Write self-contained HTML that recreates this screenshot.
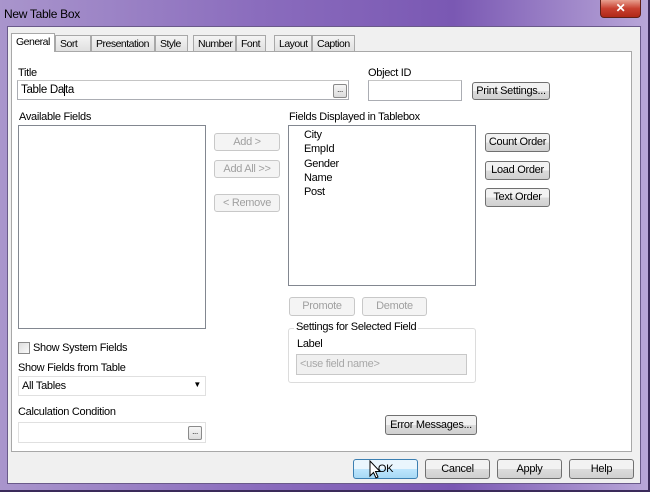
<!DOCTYPE html><html><head><style>
*{box-sizing:border-box;margin:0;padding:0}
body{width:650px;height:492px;overflow:hidden;font-family:"Liberation Sans",sans-serif;font-size:11px;color:#000;background:#8a6fb8;position:relative;letter-spacing:-0.3px}
.frame{position:absolute;left:0;top:0;width:650px;height:492px;background:linear-gradient(90deg,#a995cc 0%,#8a6cbd 40%,#7a58b3 70%,#b8a6d8 100%);border-right:2px solid #3a2a5a;border-bottom:2px solid #3a2a5a}
.title{position:absolute;left:4px;top:7px;font-size:12px;color:#000}
.close{position:absolute;left:600px;top:0;width:41px;height:18px;background:linear-gradient(#e8a090,#c84030 50%,#b02818);border:1px solid #602018;border-top:none;border-radius:0 0 4px 4px;color:#fff;font-weight:bold;text-align:center;font-size:12px;line-height:16px}
.bodyd{position:absolute;left:7px;top:26px;width:634px;height:458px;background:#f0f0f0;border:1px solid #6a5a8a}
.panel{position:absolute;left:11px;top:51px;width:621px;height:401px;background:#fff;border:1px solid #a8a8a8}
.tab{position:absolute;top:35px;height:16px;border:1px solid #a8a8a8;border-bottom:none;background:linear-gradient(#f4f4f4,#e0e0e0);padding:2px 0 0 4px;font-size:10.5px;letter-spacing:-0.5px;white-space:nowrap;overflow:hidden}
.tab.sel{top:33px;height:19px;background:#fff;z-index:2}
.a{position:absolute}
.in{position:absolute;background:#fff;border:1px solid #abadb3;border-top-color:#c5c5c5}
.btn{position:absolute;border:1px solid #707070;border-radius:3px;background:linear-gradient(#f2f2f2 50%,#dcdcdc 50%,#d0d0d0);text-align:center;font-size:11px}
.dis{border-color:#c8c8c8;background:#f4f4f4;color:#a0a0a0}
.dots{position:absolute;width:14px;height:14px;border:1px solid #8a8a8a;border-radius:2px;background:linear-gradient(#f6f6f6,#dcdcdc);font-size:8px;text-align:center;line-height:10px}
</style></head><body>
<div class="frame"></div>
<div class="title">New Table Box</div>
<div class="close">✕</div>
<div class="bodyd"></div>
<div class="panel"></div>
<div class="tab sel" style="left:11px;width:44px">General</div>
<div class="tab" style="left:55px;width:36px">Sort</div>
<div class="tab" style="left:91px;width:64px">Presentation</div>
<div class="tab" style="left:155px;width:33px">Style</div>
<div class="tab" style="left:193px;width:43px">Number</div>
<div class="tab" style="left:236px;width:30px">Font</div>
<div class="tab" style="left:274px;width:38px">Layout</div>
<div class="tab" style="left:312px;width:43px">Caption</div>

<div class="a" style="left:18px;top:67px">Title</div>
<div class="in" style="left:17px;top:80px;width:332px;height:20px"><span style="position:absolute;left:3px;top:3px;font-size:11.5px">Table Da<span style="border-left:1px solid #000"></span>ta</span></div>
<div class="dots" style="left:333px;top:84px">...</div>
<div class="a" style="left:368px;top:67px">Object ID</div>
<div class="in" style="left:368px;top:80px;width:94px;height:21px"></div>
<div class="btn" style="left:472px;top:82px;width:78px;height:18px;line-height:16px">Print Settings...</div>

<div class="a" style="left:19px;top:111px">Available Fields</div>
<div class="in" style="left:18px;top:125px;width:188px;height:204px;border-color:#828790"></div>
<div class="btn dis" style="left:214px;top:133px;width:66px;height:18px;line-height:16px">Add &gt;</div>
<div class="btn dis" style="left:214px;top:160px;width:66px;height:18px;line-height:16px">Add All &gt;&gt;</div>
<div class="btn dis" style="left:214px;top:194px;width:66px;height:18px;line-height:16px">&lt; Remove</div>

<div class="a" style="left:289px;top:111px">Fields Displayed in Tablebox</div>
<div class="in" style="left:288px;top:125px;width:188px;height:161px;border-color:#828790">
<div style="position:absolute;left:15px;top:2px;line-height:14.3px">City<br>EmpId<br>Gender<br>Name<br>Post</div></div>
<div class="btn" style="left:485px;top:133px;width:65px;height:19px;line-height:17px">Count Order</div>
<div class="btn" style="left:485px;top:161px;width:65px;height:19px;line-height:17px">Load Order</div>
<div class="btn" style="left:485px;top:188px;width:65px;height:19px;line-height:17px">Text Order</div>

<div class="btn dis" style="left:289px;top:297px;width:66px;height:19px;line-height:17px">Promote</div>
<div class="btn dis" style="left:362px;top:297px;width:65px;height:19px;line-height:17px">Demote</div>
<div class="a" style="left:288px;top:328px;width:188px;height:55px;border:1px solid #dcdcdc;border-radius:3px"></div>
<div class="a" style="left:294px;top:321px;background:#fff;padding:0 2px">Settings for Selected Field</div>
<div class="a" style="left:297px;top:338px">Label</div>
<div class="in" style="left:296px;top:354px;width:171px;height:21px;background:#f0f0f0;border-color:#c8c8c8;color:#a8a8a8;padding:3px 3px">&lt;use field name&gt;</div>

<div class="a" style="left:18px;top:342px;width:12px;height:12px;border:1px solid #8a8a8a;background:linear-gradient(135deg,#ddd,#fafafa)"></div>
<div class="a" style="left:33px;top:342px">Show System Fields</div>
<div class="a" style="left:18px;top:362px">Show Fields from Table</div>
<div class="in" style="left:18px;top:376px;width:188px;height:20px;border-color:#e0e0e0"><span style="position:absolute;left:3px;top:3px">All Tables</span><span style="position:absolute;right:4px;top:3px;font-size:8px">▼</span></div>
<div class="a" style="left:18px;top:406px">Calculation Condition</div>
<div class="in" style="left:18px;top:422px;width:188px;height:21px;border-color:#e0e0e0"></div>
<div class="dots" style="left:188px;top:426px">...</div>
<div class="btn" style="left:385px;top:415px;width:92px;height:20px;line-height:18px">Error Messages...</div>

<div class="btn" style="left:353px;top:459px;width:65px;height:20px;line-height:18px;border-color:#3c7fb1;background:linear-gradient(#eaf6fd 50%,#bee6fd 50%,#a7d9f5)">OK</div>
<div class="btn" style="left:425px;top:459px;width:65px;height:20px;line-height:18px">Cancel</div>
<div class="btn" style="left:497px;top:459px;width:65px;height:20px;line-height:18px">Apply</div>
<div class="btn" style="left:569px;top:459px;width:65px;height:20px;line-height:18px">Help</div>
<svg class="a" style="left:369px;top:460px" width="12" height="20" viewBox="0 0 12 20"><path d="M1 1 L1 16 L4.5 12.5 L7 18 L9 17 L6.5 11.5 L11 11.5 Z" fill="#fff" stroke="#000" stroke-width="1"/></svg>
</body></html>
